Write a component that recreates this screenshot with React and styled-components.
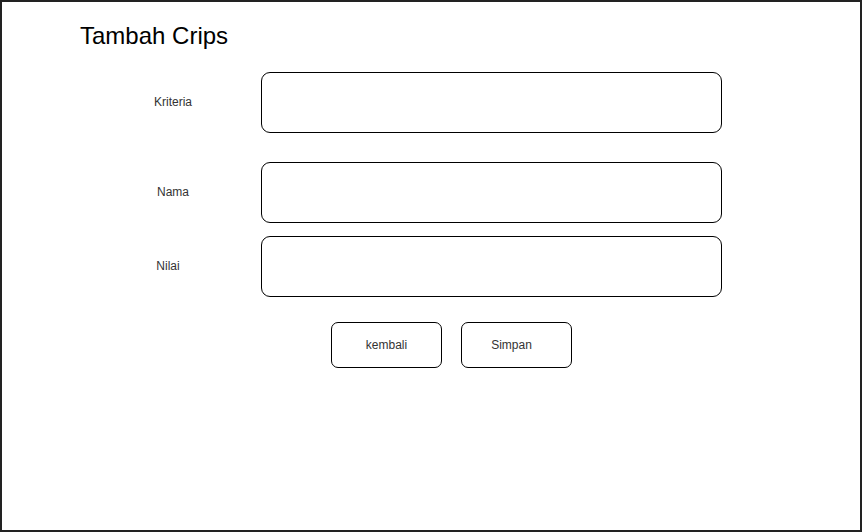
import React from "react";
import styled, { createGlobalStyle } from "styled-components";

const GlobalStyle = createGlobalStyle`
  html, body {
    margin: 0;
    padding: 0;
    background: #fff;
  }
  body {
    font-family: "Liberation Sans", Arial, Helvetica, sans-serif;
    color: #000;
  }
`;

const Frame = styled.div`
  width: 862px;
  height: 532px;
  box-sizing: border-box;
  border: 2px solid #222;
  padding-top: 20px;
  background: #fff;
`;

const Title = styled.h1`
  margin: 0 0 22px 78px;
  font-size: 24px;
  font-weight: 400;
  line-height: 28px;
  color: #000;
`;

const Row = styled.div`
  display: flex;
  align-items: center;
  gap: 28px;
  padding-left: 111px;
  margin-top: ${(p) => p.$gap || 0}px;
`;

const Label = styled.label`
  width: 120px;
  text-align: center;
  font-size: 12px;
  color: #333;
  margin-top: -2px;
  padding-right: ${(p) => p.$shift || 0}px;
  box-sizing: border-box;
`;

const Field = styled.input`
  width: 461px;
  height: 61px;
  box-sizing: border-box;
  border: 1px solid #000;
  border-radius: 9px;
  background: #fff;
  outline: none;
  padding: 0 10px;
  font: inherit;
`;

const Actions = styled.div`
  display: flex;
  gap: 19px;
  padding-left: 329px;
  margin-top: 25px;
`;

const Button = styled.button`
  width: 111px;
  height: 46px;
  box-sizing: border-box;
  border: 1px solid #000;
  border-radius: 7px;
  background: #fff;
  font-family: inherit;
  font-size: 12px;
  color: #333;
  padding: 0 ${(p) => p.$shift || 0}px 0 0;
  cursor: pointer;
`;

const fields = [
  { label: "Kriteria", gap: 0 },
  { label: "Nama", gap: 29 },
  { label: "Nilai", gap: 13, shift: 10 },
];

export default function App() {
  return (
    <>
      <GlobalStyle />
      <Frame>
        <Title>Tambah Crips</Title>
        {fields.map((f) => (
          <Row key={f.label} $gap={f.gap}>
            <Label $shift={f.shift}>{f.label}</Label>
            <Field type="text" />
          </Row>
        ))}
        <Actions>
          <Button>kembali</Button>
          <Button $shift={10}>Simpan</Button>
        </Actions>
      </Frame>
    </>
  );
}
